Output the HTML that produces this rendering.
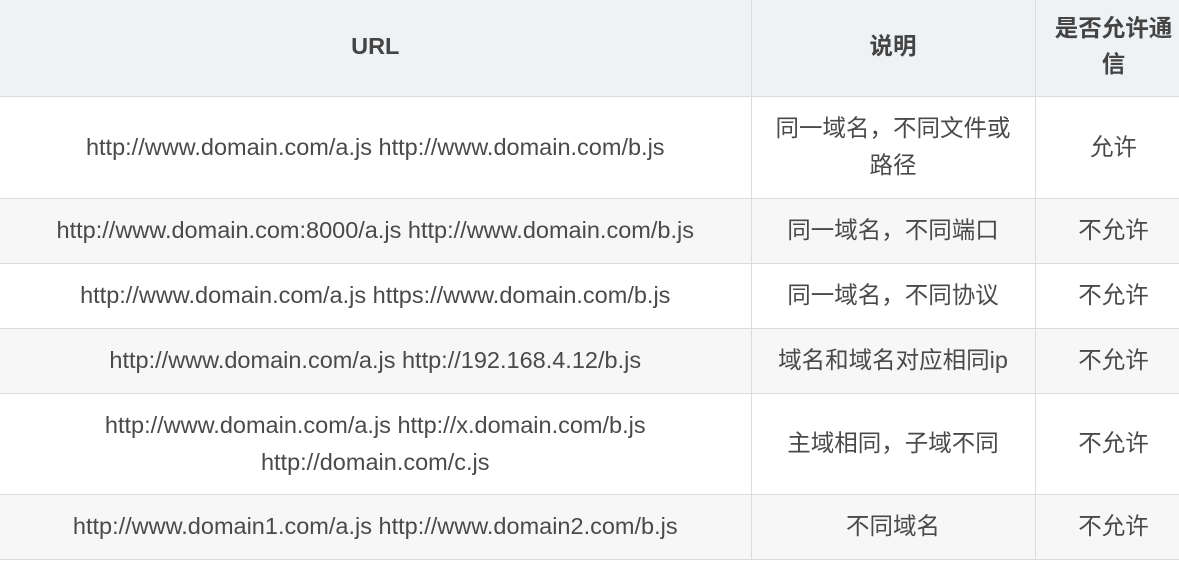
<!DOCTYPE html>
<html><head><meta charset="utf-8"><style>
html,body{margin:0;padding:0;background:#fff;width:1179px;height:566px;overflow:hidden}
table{border-collapse:collapse;table-layout:fixed;width:1192px;font-family:"Liberation Sans","Noto Sans CJK SC",sans-serif;font-size:23.5px;line-height:37px;color:#4a4a4a}
td,th{border:1px solid #dcdcdc;text-align:center;padding:0 16px;vertical-align:middle}
th{background:#eff2f5;font-weight:bold;color:#444;line-height:36px}
tr.a td{background:#f7f7f7}
tr:first-child th{border-top:none;padding-bottom:4px}
td:first-child,th:first-child{border-left:none}
</style></head><body>
<table>
<colgroup><col style="width:751px"><col style="width:284px"><col style="width:157px"></colgroup>
<tr style="height:96px"><th>URL</th><th>说明</th><th>是否允许通信</th></tr>
<tr style="height:102px"><td>http://www.domain.com/a.js http://www.domain.com/b.js</td><td>同一域名，不同文件或路径</td><td>允许</td></tr>
<tr class="a" style="height:65px"><td>http://www.domain.com:8000/a.js http://www.domain.com/b.js</td><td>同一域名，不同端口</td><td>不允许</td></tr>
<tr style="height:65px"><td>http://www.domain.com/a.js https://www.domain.com/b.js</td><td>同一域名，不同协议</td><td>不允许</td></tr>
<tr class="a" style="height:65px"><td>http://www.domain.com/a.js http://192.168.4.12/b.js</td><td>域名和域名对应相同ip</td><td>不允许</td></tr>
<tr style="height:101px"><td>http://www.domain.com/a.js http://x.domain.com/b.js<br>http://domain.com/c.js</td><td>主域相同，子域不同</td><td>不允许</td></tr>
<tr class="a" style="height:65px"><td>http://www.domain1.com/a.js http://www.domain2.com/b.js</td><td>不同域名</td><td>不允许</td></tr>
</table>
</body></html>
